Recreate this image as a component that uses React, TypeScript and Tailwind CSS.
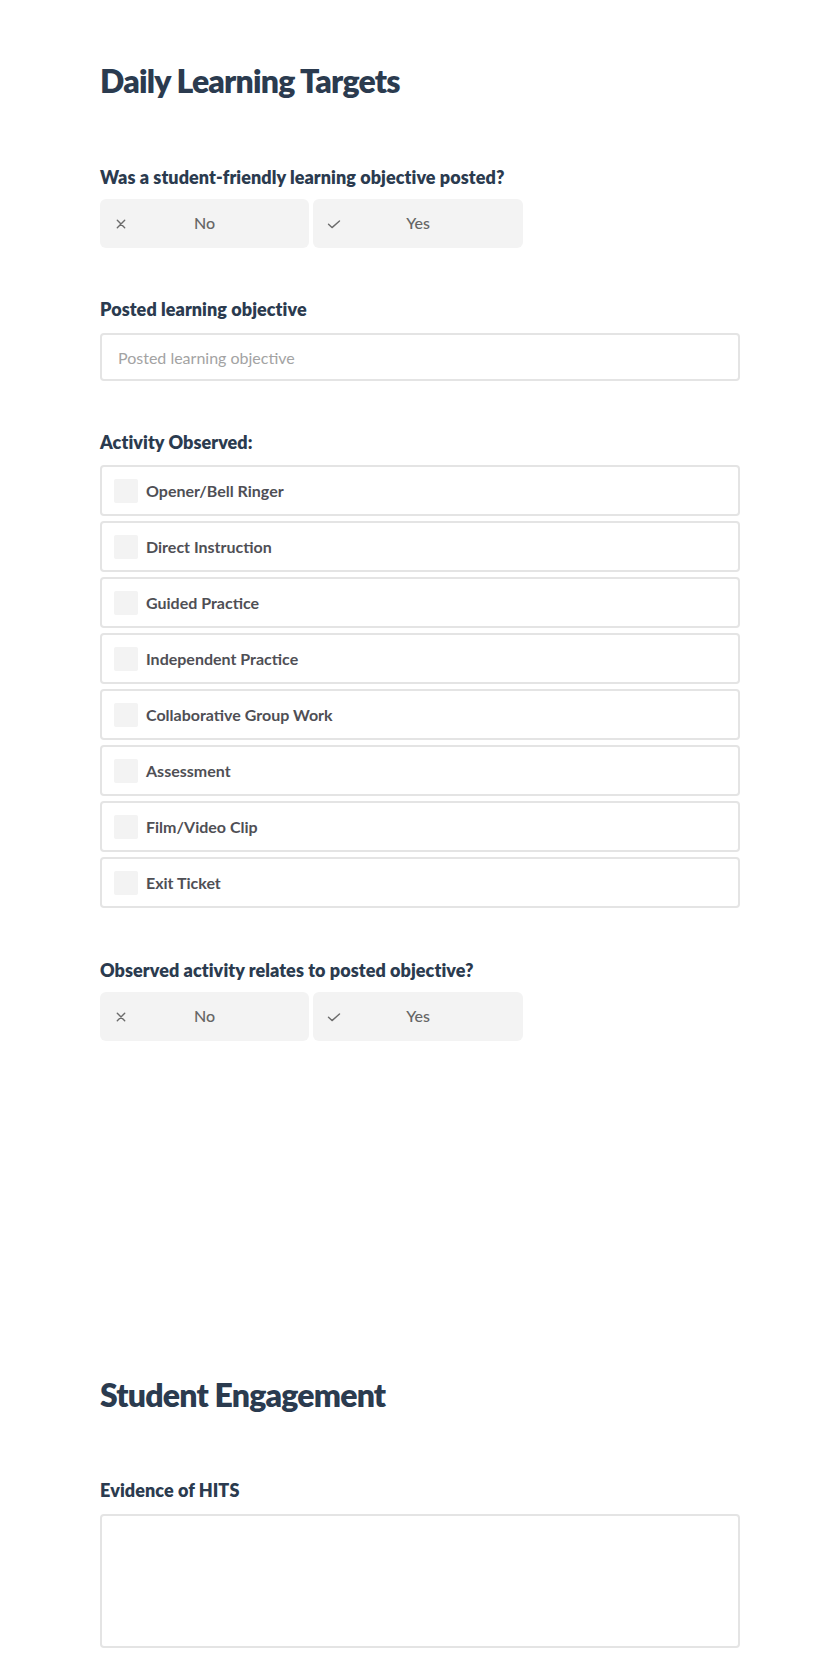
import React from "react";

const font = { fontFamily: "Lato, 'Noto Sans', sans-serif" };

function XIcon() {
  return (
    <svg width="12" height="12" viewBox="0 0 12 12" fill="none">
      <path d="M2.3 2.3 L9.7 9.7 M9.7 2.3 L2.3 9.7" stroke="#6b6b6b" strokeWidth="1.4" strokeLinecap="round" />
    </svg>
  );
}

function CheckIcon() {
  return (
    <svg width="14" height="12" viewBox="0 0 14 12" fill="none">
      <path d="M1.5 6.3 L5 9.6 L12.5 3" stroke="#6b6b6b" strokeWidth="1.4" strokeLinecap="round" strokeLinejoin="round" />
    </svg>
  );
}

function YesNo() {
  return (
    <div className="flex gap-[4px] mt-[10px]">
      <button className="relative w-[209px] h-[49px] rounded-[6px] bg-[#f3f3f3] flex items-center justify-center pb-[2px] text-[16px] text-[#666666] font-medium">
        <span className="absolute left-[15px] top-1/2 -translate-y-1/2 flex"><XIcon /></span>
        No
      </button>
      <button className="relative w-[210px] h-[49px] rounded-[6px] bg-[#f3f3f3] flex items-center justify-center pb-[2px] text-[16px] text-[#666666] font-medium">
        <span className="absolute left-[14px] top-1/2 -translate-y-1/2 flex"><CheckIcon /></span>
        Yes
      </button>
    </div>
  );
}

function Label({ children }: { children: React.ReactNode }) {
  return <div className="text-[18px] leading-[24px] font-extrabold tracking-[0.06px] text-[#2b3b4f]">{children}</div>;
}

const activities = [
  "Opener/Bell Ringer",
  "Direct Instruction",
  "Guided Practice",
  "Independent Practice",
  "Collaborative Group Work",
  "Assessment",
  "Film/Video Clip",
  "Exit Ticket",
];

export default function App() {
  return (
    <div className="min-h-[1680px] bg-white" style={font}>
      <div className="w-[640px] mx-auto pt-[61px] pb-[32px]">
        <h1 className="text-[32px] leading-[40px] font-extrabold tracking-[-0.8px] text-[#2b3b4f]">Daily Learning Targets</h1>

        <div className="mt-[64px]">
          <Label>Was a student-friendly learning objective posted?</Label>
          <YesNo />
        </div>

        <div className="mt-[49px]">
          <Label>Posted learning objective</Label>
          <input
            placeholder="Posted learning objective"
            className="mt-[12px] w-full h-[48px] border-2 border-[#e4e4e4] rounded-[4px] px-[16px] text-[16px] text-[#444] placeholder:text-[#a3a3a3] outline-none"
          />
        </div>

        <div className="mt-[49px]">
          <Label>Activity Observed:</Label>
          <div className="mt-[11px] flex flex-col gap-[5px]">
            {activities.map((a) => (
              <label
                key={a}
                className="h-[51px] border-2 border-[#e4e4e4] rounded-[4px] flex items-center pl-[12px] gap-[8px]"
              >
                <span className="w-[24px] h-[24px] bg-[#f3f3f3] rounded-[2px]" />
                <span className="text-[16px] font-bold text-[#4f4f55]">{a}</span>
              </label>
            ))}
          </div>
        </div>

        <div className="mt-[50px]">
          <Label>Observed activity relates to posted objective?</Label>
          <YesNo />
        </div>

        <h1 className="mt-[334px] text-[32px] leading-[40px] font-extrabold tracking-[-0.8px] text-[#2b3b4f]">Student Engagement</h1>

        <div className="mt-[63px]">
          <Label>Evidence of HITS</Label>
          <textarea className="mt-[12px] block w-full h-[134px] border-2 border-[#e4e4e4] rounded-[4px] resize-none outline-none" />
        </div>
      </div>
    </div>
  );
}
